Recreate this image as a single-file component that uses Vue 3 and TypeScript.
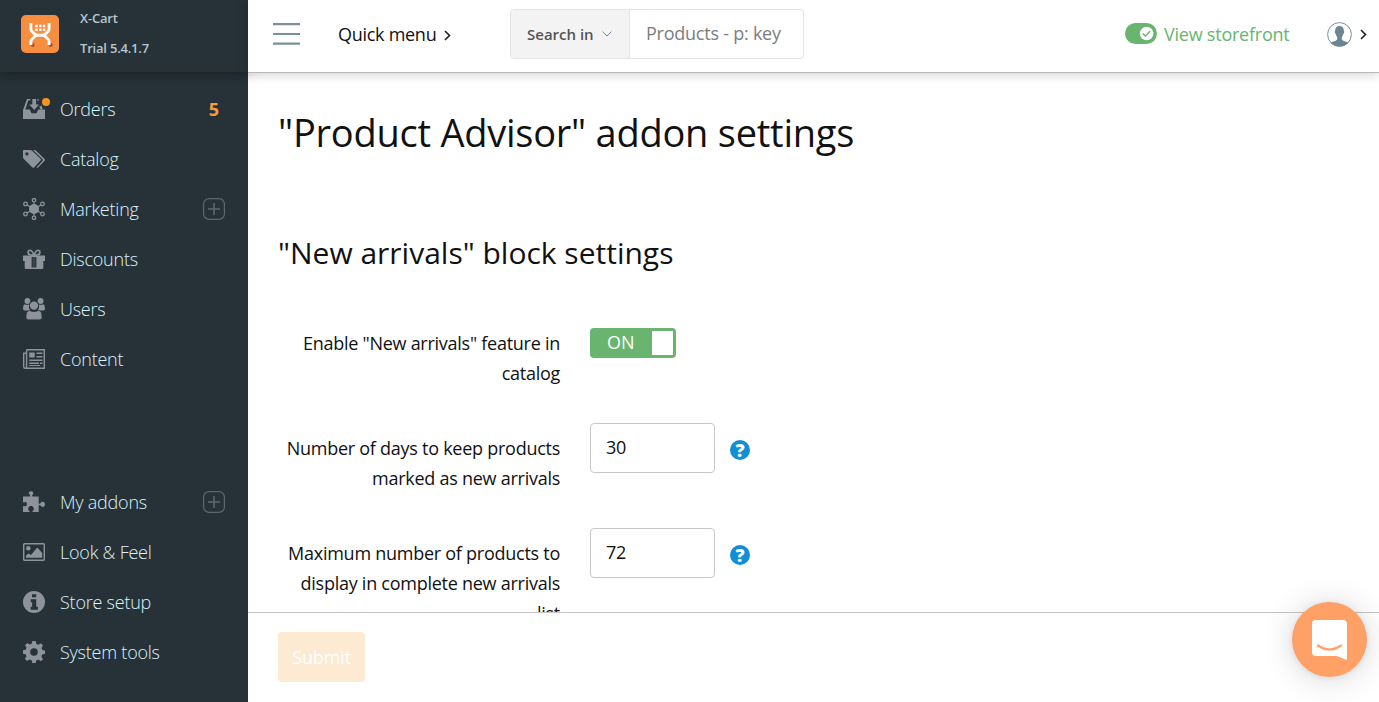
<script setup lang="ts">
interface NavItem {
  id: string
  label: string
  count?: number
  plus?: boolean
}

interface Field {
  id: string
  label: string
  value: string
}

const mainNav: NavItem[] = [
  { id: 'orders', label: 'Orders', count: 5 },
  { id: 'catalog', label: 'Catalog' },
  { id: 'marketing', label: 'Marketing', plus: true },
  { id: 'discounts', label: 'Discounts' },
  { id: 'users', label: 'Users' },
  { id: 'content', label: 'Content' },
]

const systemNav: NavItem[] = [
  { id: 'addons', label: 'My addons', plus: true },
  { id: 'look', label: 'Look & Feel' },
  { id: 'setup', label: 'Store setup' },
  { id: 'tools', label: 'System tools' },
]

const fields: Field[] = [
  { id: 'days', label: 'Number of days to keep products marked as new arrivals', value: '30' },
  { id: 'max', label: 'Maximum number of products to display in complete new arrivals list', value: '72' },
]
</script>

<template>
  <div class="app">
    <aside class="sidebar">
      <div class="brand">
        <svg class="logo" viewBox="0 0 38 38">
          <rect width="38" height="38" rx="5" fill="#f68d3f" />
          <circle cx="11.800" cy="30" r="1.900" fill="#a9502b" />
          <circle cx="29.800" cy="30" r="1.900" fill="#a9502b" />
          <path d="M9.900 8v6q0 1.700 1.200 2.700l2.700 2.400q1.300 1.200 3 1.200h4.400q1.700 0 3-1.200l2.700-2.400q1.200-1 1.200-2.700V8M9.900 30v-3.300q0-1.700 1.200-2.700l3.500-3.300M28.100 30v-3.300q0-1.700-1.200-2.700l-3.500-3.300" fill="none" stroke="#fff" stroke-width="2.900" />
          <path d="M14.200 9.700h2.500v2.500h-2.500zM18 9.700h2.500v2.500H18zM21.800 9.700h2.500v2.500h-2.500zM14.200 13.600h2.500v2.500h-2.500zM18 13.600h2.500v2.500H18zM21.800 13.600h2.500v2.500h-2.500z" fill="#fff" />
        </svg>
        <div class="brand-text">
          <span>X-Cart</span>
          <span>Trial 5.4.1.7</span>
        </div>
      </div>
      <nav v-for="(group, index) in [mainNav, systemNav]" :key="index" class="nav">
        <a v-for="item in group" :key="item.id" class="nav-item">
          <svg class="nav-icon" viewBox="0 0 22 22">
            <template v-if="item.id === 'orders'">
              <path d="M4 1h3.500L7 2.500H5.300L2.300 11.500h4.500l1.700 3.700h5l1.700-3.700H22V21H0v-9z" fill="currentColor" />
              <path d="M9.300 1h3.800v5.500h3L11.200 12 6.200 6.500h3.100zM14.500 1h1v2h-1z" fill="currentColor" />
              <path d="M18.500 7.500l1.300 4h-2.500l-1-3z" fill="currentColor" />
            </template>
            <template v-else-if="item.id === 'catalog'">
              <path fill-rule="evenodd" d="M0 2.800Q0 2 .8 2h6.500q1 0 1.800.8l8.500 8q.8.800 0 1.600l-6.500 7q-.8.800-1.600 0L.9 11Q0 10 0 9zM3.900 4.300a1.600 1.600 0 1 0 0 3.200 1.600 1.600 0 0 0 0-3.200z" fill="currentColor" />
              <path d="M10 2h1.600q.7 0 1.300.6l8.700 8.500q.8.800 0 1.600l-6.500 6.700q-.8.700-1.600 0l6-6.600q.7-.8 0-1.600z" fill="currentColor" />
            </template>
            <template v-else-if="item.id === 'marketing'">
              <path d="M11 11V4M11 11v7M11 11L4 7M11 11l7-4M11 11l-7 4M11 11l7 4" stroke="currentColor" stroke-width="1.100" />
              <circle cx="11" cy="11" r="5" fill="currentColor" />
              <g fill="none" stroke="currentColor" stroke-width="1.300">
                <circle cx="11" cy="2.200" r="1.700" /><circle cx="11" cy="19.800" r="1.700" />
                <circle cx="2.500" cy="6" r="1.800" /><circle cx="19.500" cy="6" r="1.800" />
                <circle cx="2.500" cy="16" r="1.800" /><circle cx="19.500" cy="16" r="1.800" />
              </g>
            </template>
            <template v-else-if="item.id === 'discounts'">
              <path d="M.6 7.500h20.800q.6 0 .6.600V13h-1.700v6.700q0 1.300-1.300 1.300H3q-1.300 0-1.300-1.300V13H0V8.100q0-.6.600-.6z" fill="currentColor" />
              <path d="M8.600 9h4.800v10.500H8.600z" fill="#263238" />
              <path d="M9.700 9h2.600v10.500H9.700z" fill="currentColor" opacity=".2" />
              <path d="M11 7C9.500 3.500 8 2 6.500 2.300 4.500 2.600 4.500 6 7 6.800zM11 7c1.500-3.500 3-5 4.500-4.700C17.500 2.600 17.500 6 15 6.800z" fill="none" stroke="currentColor" stroke-width="1.700" />
            </template>
            <g v-else-if="item.id === 'users'" fill="currentColor">
              <circle cx="4.400" cy="3" r="2.900" /><circle cx="17.600" cy="3" r="2.900" />
              <path d="M1.500 6.200q2.900 1 4.700 0-.9 3.500 1.200 6.200H1.600Q0 12.400 0 10.500q0-3.500 1.500-4.300zM20.500 6.200q-2.900 1-4.700 0 .9 3.500-1.200 6.200h5.800q1.600 0 1.600-1.900 0-3.500-1.500-4.300z" />
              <circle cx="11" cy="7.600" r="4.900" fill="#263238" />
              <path d="M6.200 12.400Q11 15 15.800 12.400 19 13 19 19.500q0 2.300-2.300 2.300H5.300Q3 21.800 3 19.500q0-6.500 3.200-7.100z" stroke="#263238" stroke-width=".6" />
              <circle cx="11" cy="7.600" r="4.200" />
            </g>
            <template v-else-if="item.id === 'content'">
              <path d="M3.600 1.700h17.700v18.600H2.200Q.7 20.300.7 18.800V5.200h2.900M3.600 1.700v17q0 1.600-1.400 1.600" fill="none" stroke="currentColor" stroke-width="1.400" />
              <path d="M6.200 4.500h5.500v5H6.200zM13.500 4.500h6V6h-6zM13.500 8h6v1.400h-6zM6.200 11.500h13.300V13H6.200zM6.200 14.500h9.800V16H6.200zM17 14.500h2.500V16H17zM6.200 17h11v.9h-11z" fill="currentColor" />
            </template>
            <path v-else-if="item.id === 'addons'" d="M0 5.500h6.700q.8-.3.300-1.600C4.900 2.500 5.700.3 8 .3s3 2.200 1.300 3.600q-.5 1.300.4 1.600h6v6.700q.4 1 1.600.2c.7-1.300 1.200-1.700 2.300-1.700 3.200 0 3.200 5.200 0 5.200-1.100 0-1.600-.5-2.300-1.600q-1.200-.8-1.600.3V21H9.500v-.9q1.700-.7 1.300-2.800C10.300 15.500 9 14.900 8 14.900s-2.500.6-2.800 2.400q-.3 2.100 1.300 2.800v.9H0v-5.300q.2-1.200 1.700-.5c2.500 1 3.300-5 0-4q-1.400.7-1.700-.5z" fill="currentColor" />
            <template v-else-if="item.id === 'look'">
              <rect x=".7" y="2.700" width="20.600" height="16.600" rx="1" fill="none" stroke="currentColor" stroke-width="1.400" />
              <circle cx="5.300" cy="7.200" r="2.200" fill="currentColor" />
              <path d="M3 16.800v-2l2.500-2.300L8 14l6.200-7.500L19.200 12v4.800z" fill="currentColor" />
            </template>
            <template v-else-if="item.id === 'setup'">
              <circle cx="11" cy="11" r="11" fill="currentColor" />
              <path d="M9 3.200h4.200v3H9zM7.700 8.200h5.500v7.600h1.700v3H7.700v-3h1.500v-4.600H7.700z" fill="#263238" />
            </template>
            <path v-else fill-rule="evenodd" d="M9.300 0h3.400l.7 3 2 .8L18 2.200l2 2.400-1.500 2.500.8 2 2.700.4v3.300l-2.800.7-.8 2 1.600 2.700-2.300 2-2.400-1.600-2 .8-.6 2.600H9.300l-.7-2.700-2-.8L4 19.900 1.900 17.700l1.600-2.400-.9-2L0 12.700V9.300l2.700-.6.8-1.900L2 4.300 4.300 2l2.400 1.500 1.900-.7zM11 7.200a3.800 3.800 0 1 0 0 7.600 3.800 3.800 0 0 0 0-7.600z" fill="currentColor" />
          </svg>
          <i v-if="item.count" class="dot"></i>
          <span class="nav-label">{{ item.label }}</span>
          <b v-if="item.count" class="count">{{ item.count }}</b>
          <svg v-if="item.plus" class="plus" viewBox="0 0 22 22">
            <rect x=".6" y=".6" width="20.800" height="20.800" rx="5.500" />
            <path d="M5 11h12M11 5v12" />
          </svg>
        </a>
      </nav>
    </aside>

    <section class="main">
      <header class="topbar">
        <svg class="burger" viewBox="0 0 28 22"><path d="M1 1.100h27M1 11h27M1 20.700h27" /></svg>
        <a class="quick">Quick menu</a>
        <svg class="chev" viewBox="0 0 7 11"><path d="M1 1l4.500 4.500L1 10" /></svg>
        <div class="search">
          <div class="scope">
            <span>Search in</span>
            <svg viewBox="0 0 10 6"><path d="M.6.600L5 5 9.400.600" /></svg>
          </div>
          <div class="query">Products - p: key</div>
        </div>
        <div class="store">
          <svg viewBox="0 0 32 21">
            <rect width="32" height="21" rx="10.500" fill="#69b46f" />
            <circle cx="21.600" cy="10.500" r="6.800" fill="#fff" />
            <path d="M17.800 10.500l2.500 2.500 4.700-4.700" fill="none" stroke="#69b46f" stroke-width="1.400" />
          </svg>
          <span>View storefront</span>
        </div>
        <svg class="avatar" viewBox="0 0 25 25">
          <circle cx="12.500" cy="12.500" r="11.900" fill="#fff" stroke="#78909c" />
          <path d="M12.500 4c3 0 4.400 1.800 4.300 4.800.8.200.5 2.400-.5 3-.3 1.800-1 2.600-1.500 3.300v2.300c1 1.600 4.200 1.700 6.400 3.100-3.800 5.300-13.600 5.300-17.400 0 2.200-1.400 5.400-1.500 6.400-3.100v-2.300c-.5-.7-1.200-1.500-1.500-3.300-1-.6-1.300-2.800-.5-3-.1-3 1.300-4.800 4.300-4.800z" fill="#6d8591" />
        </svg>
        <svg class="chev last" viewBox="0 0 7 11"><path d="M1 1l4.500 4.500L1 10" /></svg>
      </header>

      <div class="content">
        <h1>"Product Advisor" addon settings</h1>
        <h2>"New arrivals" block settings</h2>
        <div class="row">
          <label>Enable "New arrivals" feature in catalog</label>
          <div class="switch"><span>ON</span><i></i></div>
        </div>
        <div v-for="field in fields" :key="field.id" class="row">
          <label>{{ field.label }}</label>
          <div class="input">{{ field.value }}</div>
          <div class="help">?</div>
        </div>
      </div>

      <footer class="actions">
        <button class="submit">Submit</button>
      </footer>
    </section>

    <div class="chat">
      <svg viewBox="0 0 35 40">
        <path d="M4 0h27q4 0 4 4v36l-10.500-4H4q-4 0-4-4V4q0-4 4-4z" fill="#fff" />
        <path d="M6 25.500q11.500 8 23 0" fill="none" stroke="#ffa066" stroke-width="2.200" stroke-linecap="round" />
      </svg>
    </div>
  </div>
</template>

<style>
body {
  overflow: hidden;
}
</style>

<style scoped>
* {
  box-sizing: border-box;
}
.app {
  display: grid;
  grid-template-columns: 248px 1fr;
  height: 702px;
  overflow: hidden;
  position: relative;
  background: #fff;
  color: #111;
  font: 400 18px/30px "Open Sans", "Noto Sans", sans-serif;
}
.sidebar {
  background: #263238;
  display: flex;
  flex-direction: column;
}
.brand {
  display: flex;
  height: 72px;
  padding: 3px 0 0 21px;
  gap: 21px;
  flex: none;
  box-shadow: 0 1px 12px rgba(0, 0, 0, 0.45);
}
.logo {
  width: 38px;
  height: 38px;
  margin-top: 12px;
}
.brand-text {
  display: flex;
  flex-direction: column;
  color: #b9c7ce;
  font-size: 13px;
  font-weight: 600;
  letter-spacing: -0.2px;
}
.nav {
  padding-top: 12px;
}
.nav + .nav {
  padding-top: 93px;
}
.nav-item {
  height: 50px;
  display: flex;
  align-items: center;
  padding: 0 23px;
  position: relative;
}
.nav-icon {
  width: 22px;
  height: 22px;
  color: #8c939d;
  flex: none;
}
.dot {
  position: absolute;
  left: 42px;
  top: 14px;
  width: 8px;
  height: 8px;
  border-radius: 50%;
  background: #f7941e;
}
.nav-label {
  flex: 1;
  margin-left: 15px;
  font-weight: 300;
  letter-spacing: -0.23px;
  color: #dcf3ff;
}
.count {
  width: 22px;
  text-align: center;
  font-weight: 700;
  color: #fd9a3c;
}
.plus {
  width: 22px;
  height: 22px;
  fill: none;
  stroke: #5d676c;
  stroke-width: 1.2;
}
.plus path {
  stroke-width: 1.6;
}
.main {
  display: grid;
  grid-template-rows: 73px minmax(0, 1fr) 90px;
  min-width: 0;
  height: 702px;
}
.topbar {
  display: flex;
  align-items: center;
  border-bottom: 1px solid #b9b9b9;
  padding: 0 12px 4px 24px;
  background: #fff;
  box-shadow: 0 1px 11px rgba(0, 0, 0, 0.2);
  position: relative;
}
.burger {
  width: 28px;
  height: 22px;
  margin-right: 38px;
  fill: none;
  stroke: #78909c;
  stroke-width: 2.2;
}
.quick {
  width: 98px;
  white-space: nowrap;
  letter-spacing: -0.28px;
}
.chev {
  width: 7px;
  height: 11px;
  margin: 2px 0 0 8px;
  fill: none;
  stroke: #222;
  stroke-width: 1.6;
}
.search {
  display: flex;
  width: 294px;
  height: 50px;
  margin-left: 59px;
  border: 1px solid #e4e4e4;
  border-radius: 4px;
  overflow: hidden;
}
.scope {
  width: 119px;
  display: flex;
  align-items: center;
  justify-content: space-between;
  padding: 0 17px 0 16px;
  background: #f3f3f3;
  border-right: 1px solid #e4e4e4;
  font-size: 15px;
  font-weight: 600;
  color: #555;
}
.scope svg {
  width: 10px;
  height: 6px;
  fill: none;
  stroke: #7e8ba3;
}
.query {
  padding: 8px 0 0 16px;
  color: #7d7d7d;
  letter-spacing: -0.24px;
}
.store {
  margin-left: auto;
  display: flex;
  align-items: center;
  color: #69b46f;
}
.store svg {
  width: 32px;
  height: 21px;
  margin: -2px 7px 0 0;
}
.store span {
  width: 127px;
  white-space: nowrap;
  letter-spacing: -0.23px;
}
.avatar {
  width: 25px;
  height: 25px;
  margin-left: 36px;
}
.chev.last {
  margin-top: 0;
}
.content {
  overflow: hidden;
  padding: 32px 30px 0;
}
h1,
h2 {
  font-weight: 400;
  margin: 0;
  white-space: nowrap;
}
h1 {
  font-size: 38px;
  line-height: 54px;
  letter-spacing: -0.24px;
}
h2 {
  font-size: 30px;
  line-height: 42px;
  margin: 73px 0 54px;
}
.row {
  display: flex;
  align-items: flex-start;
  min-height: 60px;
  margin-bottom: 45px;
}
label {
  width: 282px;
  margin-right: 30px;
  text-align: right;
  letter-spacing: -0.26px;
}
.switch {
  width: 86px;
  height: 30px;
  border: 3px solid #69b46f;
  border-radius: 4px;
  background: #69b46f;
  display: flex;
  justify-content: space-between;
  line-height: 23px;
  color: #fff;
}
.switch span {
  padding-left: 14px;
}
.switch i {
  width: 21px;
  background: #fff;
}
.input {
  width: 125px;
  height: 50px;
  margin-top: -10px;
  padding: 8px 15px;
  border: 1px solid #c8c8c8;
  border-radius: 4px;
  letter-spacing: -0.2px;
}
.help {
  width: 20px;
  height: 20px;
  margin: 7px 0 0 15px;
  border-radius: 50%;
  background: #0f8fd6;
  color: #fff;
  font-size: 18px;
  font-weight: 800;
  line-height: 20px;
  text-align: center;
}
.actions {
  border-top: 1px solid #c4c4c4;
  padding: 19px 30px;
  background: #fff;
}
.submit {
  width: 87px;
  height: 50px;
  padding: 0;
  border: 0;
  border-radius: 4px;
  background: #fdead3;
  color: #fff;
  font: inherit;
  font-weight: 500;
  letter-spacing: -0.2px;
}
.chat {
  position: absolute;
  left: 1292px;
  top: 602px;
  width: 75px;
  height: 75px;
  border-radius: 50%;
  background: #ffa066;
  box-shadow: 0 1px 6px rgba(0, 0, 0, 0.08), 0 2px 32px rgba(0, 0, 0, 0.16);
}
.chat svg {
  display: block;
  width: 35px;
  height: 40px;
  margin: 18px 0 0 20px;
}
</style>
